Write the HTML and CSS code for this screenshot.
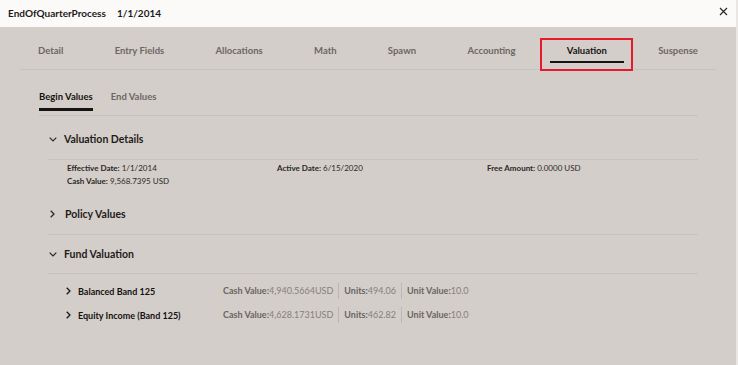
FILE: index.html
```html
<!DOCTYPE html>
<html lang="en">
<head>
  <meta charset="UTF-8" />
  <title>EndOfQuarterProcess</title>
  <link rel="stylesheet" href="styles.css">
</head>
<body>
  <header class="dialog-head">
    <div class="title"><span>EndOfQuarterProcess</span><span>1/1/2014</span></div>
    <button class="close" aria-label="Close">
      <svg width="9" height="9" viewBox="0 0 9 9"><path d="M1 1L8 8M8 1L1 8" stroke="#2b2826" stroke-width="1.2" fill="none"/></svg>
    </button>
  </header>

  <nav class="tabs">
    <a>Detail</a>
    <a>Entry Fields</a>
    <a>Allocations</a>
    <a>Math</a>
    <a>Spawn</a>
    <a>Accounting</a>
    <a class="active">Valuation</a>
    <a>Suspense</a>
  </nav>

  <main class="panel">
    <div class="subtabs">
      <a class="active">Begin Values</a>
      <a>End Values</a>
    </div>

    <section class="group first">
      <h3 class="group-head">
        <svg class="chev-down" width="8" height="5" viewBox="0 0 8 5"><path d="M0.7 0.7L4 4L7.3 0.7" stroke="#2b2826" stroke-width="1.2" fill="none"/></svg>
        Valuation Details
      </h3>
      <div class="details">
        <div><b>Effective Date:</b> 1/1/2014</div>
        <div><b>Active Date:</b> 6/15/2020</div>
        <div><b>Free Amount:</b> 0.0000 USD</div>
        <div><b>Cash Value:</b> 9,568.7395 USD</div>
      </div>
    </section>

    <section class="group">
      <h3 class="group-head">
        <svg class="chev-right" width="5" height="8" viewBox="0 0 5 8"><path d="M0.7 0.7L4 4L0.7 7.3" stroke="#2b2826" stroke-width="1.3" fill="none"/></svg>
        Policy Values
      </h3>
    </section>

    <section class="group last">
      <h3 class="group-head">
        <svg class="chev-down" width="8" height="5" viewBox="0 0 8 5"><path d="M0.7 0.7L4 4L7.3 0.7" stroke="#2b2826" stroke-width="1.2" fill="none"/></svg>
        Fund Valuation
      </h3>
      <div class="funds">
        <div class="fund">
          <div class="fund-name">
            <svg width="5" height="8" viewBox="0 0 5 8"><path d="M0.7 0.7L4 4L0.7 7.3" stroke="#1c1a18" stroke-width="1.3" fill="none"/></svg>
            Balanced Band 125
          </div>
          <div class="fund-vals">
            <span><b>Cash Value:</b>4,940.5664USD</span>
            <span><b>Units:</b>494.06</span>
            <span><b>Unit Value:</b>10.0</span>
          </div>
        </div>
        <div class="fund">
          <div class="fund-name">
            <svg width="5" height="8" viewBox="0 0 5 8"><path d="M0.7 0.7L4 4L0.7 7.3" stroke="#1c1a18" stroke-width="1.3" fill="none"/></svg>
            Equity Income (Band 125)
          </div>
          <div class="fund-vals">
            <span><b>Cash Value:</b>4,628.1731USD</span>
            <span><b>Units:</b>462.82</span>
            <span><b>Unit Value:</b>10.0</span>
          </div>
        </div>
      </div>
    </section>
  </main>
</body>
</html>
```

FILE: styles.css
```css
body { margin: 0; height: 365px; background-color: #d3cec9; font-family: Lato, "Noto Sans", sans-serif; color: #1f1c1a; border-right: 2px solid #e9e6e3; box-sizing: border-box; overflow: hidden; }

.dialog-head { height: 27px; background-color: #fbfaf9; display: flex; align-items: center; justify-content: space-between; padding: 0 8px; }
.dialog-head .title { font-size: 10px; font-weight: bold; display: flex; gap: 11px; color: #1c1a18; margin-top: -2px; }
.close { border: none; background: none; padding: 0; margin-top: -5px; display: flex; }

.tabs { display: flex; gap: 17.3px; margin: 0 20px 0 20px; padding: 17px 0 6px 1px; border-bottom: 1px solid #c7c2be; }
.tabs a { position: relative; flex-shrink: 0; white-space: nowrap; padding: 0 17px 3px; font-size: 9.5px; font-weight: bold; line-height: 14px; color: #6c6764; border-bottom: 2px solid transparent; }
.tabs a.active { color: #161412; border-bottom-color: #161412; }
.tabs a.active::after { content: ""; position: absolute; left: -10px; right: -9px; top: -6px; bottom: -10px; border: 2px solid #e8192c; }

.panel { margin: 0 38px 0 39px; }

.subtabs { display: flex; gap: 18px; padding: 20px 0 4px; border-bottom: 1px solid #c7c2be; }
.subtabs a { font-size: 9.5px; font-weight: bold; line-height: 14px; color: #6c6764; padding-bottom: 4px; border-bottom: 3px solid transparent; }
.subtabs a.active { color: #161412; border-bottom-color: #161412; }

.group { margin-left: 9px; }
.group-head { margin: 0; display: flex; align-items: center; gap: 7px; padding: 12px 0 13px 1px; font-size: 10.5px; line-height: 14px; font-weight: bold; color: #1f1c1a; border-bottom: 1px solid #c7c2be; }
.group.first .group-head { padding-top: 16px; }
.group.last .group-head { padding-bottom: 12px; }
.group-head .chev-right { margin: 0 3px 0 1px; }

.details { display: grid; grid-template-columns: 210px 210px 1fr; padding: 2px 0 7px 19px; font-size: 8px; line-height: 13px; color: #2b2826; }
.details b { font-weight: bold; }

.funds { padding: 5px 0 0 18px; }
.fund { display: flex; align-items: center; height: 24px; }
.fund-name { width: 157px; display: flex; align-items: center; gap: 7px; font-size: 9px; font-weight: bold; color: #141210; }
.fund-vals { display: flex; align-items: center; font-size: 9px; color: #86807c; }
.fund-vals span { padding: 0 5px; border-left: 1px solid #bcb7b3; line-height: 16px; }
.fund-vals span:first-child { padding-left: 0; border-left: none; }
.fund-vals b { color: #6a6562; }
```
